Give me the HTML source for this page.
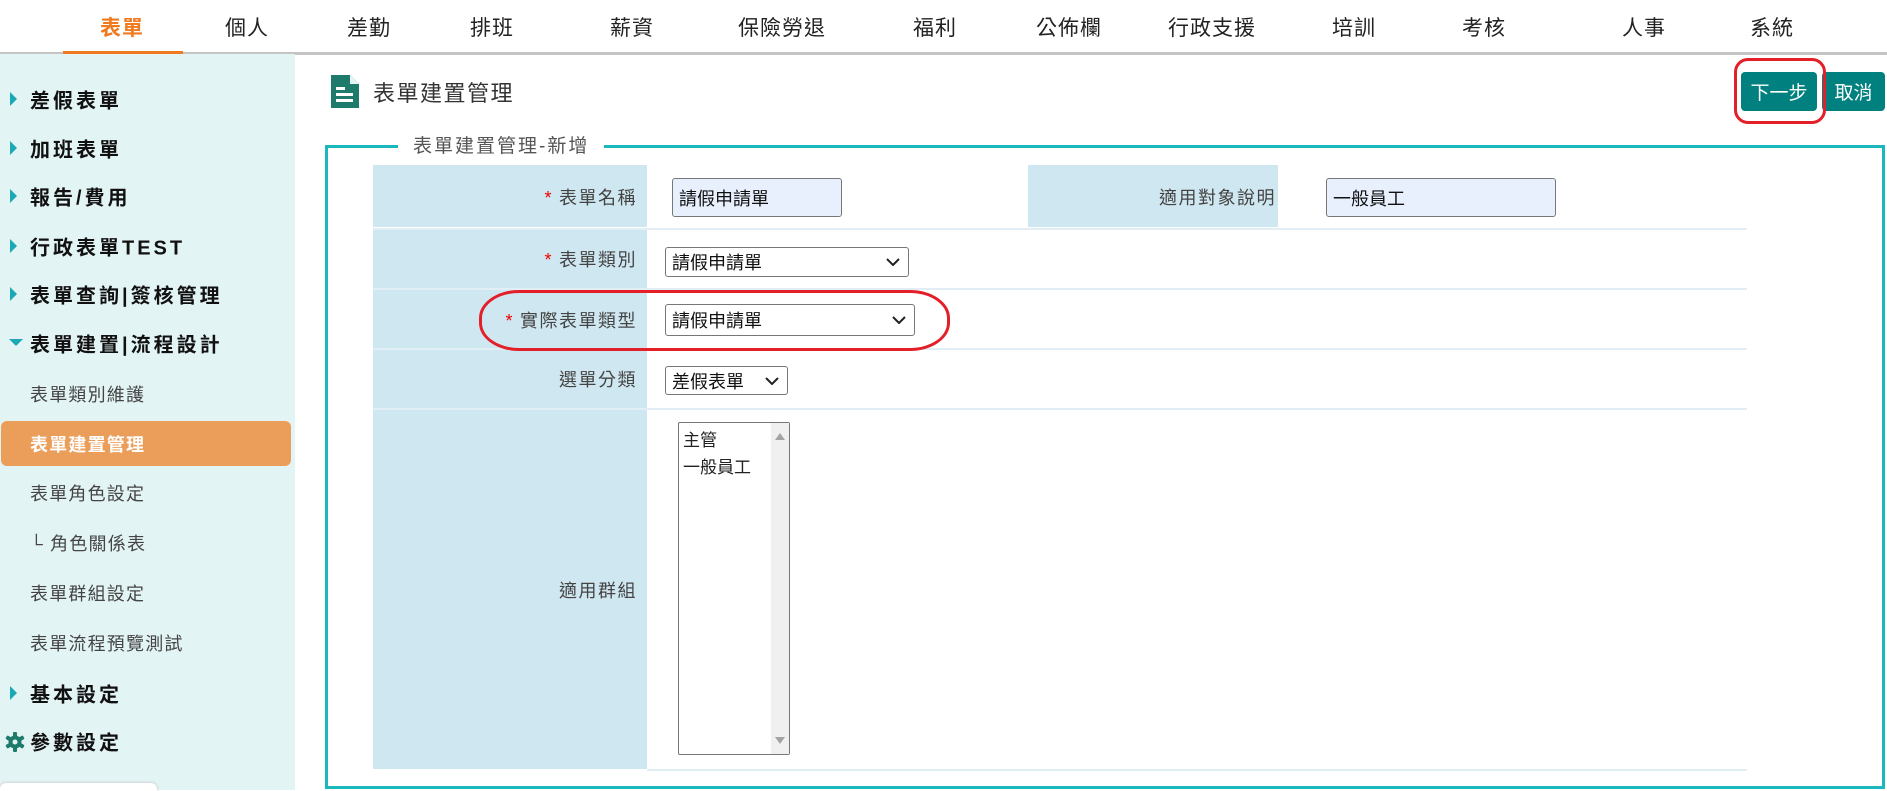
<!DOCTYPE html>
<html><head><meta charset="utf-8"><style>
*{margin:0;padding:0;box-sizing:border-box}
body{width:1887px;height:790px;overflow:hidden;background:#fff;font-family:"Liberation Sans","Noto Sans CJK TC",sans-serif;position:relative;color:#222}
.a{position:absolute}
.tab{position:absolute;top:12px;font-size:21px;color:#222;transform:translateX(-50%);letter-spacing:1px;white-space:nowrap}
.side{left:0;top:54px;width:295px;height:736px;background:#e3f4f5}
.si{position:absolute;left:30px;font-size:20px;font-weight:bold;letter-spacing:3px;color:#111;transform:translateY(-50%);white-space:nowrap}
.tri{position:absolute;left:10px;width:0;height:0;border-top:7px solid transparent;border-bottom:7px solid transparent;border-left:7px solid #1aa9b5;transform:translateY(-50%)}
.sub{position:absolute;left:30px;font-size:18px;letter-spacing:1.2px;color:#444;transform:translateY(-50%);white-space:nowrap}
.lab{position:absolute;background:#cfe7f0}
.lt{position:absolute;font-size:18px;color:#444;letter-spacing:1.5px;text-align:right;transform:translateY(-50%);white-space:nowrap}
.lt b{color:#e00;font-weight:normal;margin-right:6px}
.inp{position:absolute;background:#e8f0fe;border:1px solid #777;border-radius:3px;font-size:18px;padding-left:6px;display:flex;align-items:center;color:#111}
.sel{position:absolute;background:#fff;border:1px solid #777;border-radius:3px;font-size:18px;padding-left:6px;display:flex;align-items:center;color:#111}
.sel svg{position:absolute;right:8px;top:50%;margin-top:-4px}
.sep{position:absolute;background:#e2eef5;height:2px}
</style></head><body>
<div class="a" style="left:0;top:52px;width:1887px;height:3px;background:#c4c4c4"></div>
<div class="a" style="left:63px;top:51px;width:120px;height:4px;background:#f07a20"></div>
<div class="tab" style="left:122px;color:#f07a20;font-weight:bold">表單</div>
<div class="tab" style="left:247px">個人</div>
<div class="tab" style="left:369px">差勤</div>
<div class="tab" style="left:492px">排班</div>
<div class="tab" style="left:632px">薪資</div>
<div class="tab" style="left:782px">保險勞退</div>
<div class="tab" style="left:935px">福利</div>
<div class="tab" style="left:1069px">公佈欄</div>
<div class="tab" style="left:1212px">行政支援</div>
<div class="tab" style="left:1354px">培訓</div>
<div class="tab" style="left:1484px">考核</div>
<div class="tab" style="left:1644px">人事</div>
<div class="tab" style="left:1772px">系統</div>

<div class="a side"></div>
<div class="tri" style="top:99px"></div><div class="si" style="top:99px">差假表單</div>
<div class="tri" style="top:148px"></div><div class="si" style="top:148px">加班表單</div>
<div class="tri" style="top:196px"></div><div class="si" style="top:196px">報告/費用</div>
<div class="tri" style="top:246px"></div><div class="si" style="top:246px">行政表單TEST</div>
<div class="tri" style="top:294px"></div><div class="si" style="top:294px">表單查詢|簽核管理</div>
<div class="a" style="left:9px;top:339px;border-left:7px solid transparent;border-right:7px solid transparent;border-top:7px solid #1aa9b5"></div><div class="si" style="top:343px">表單建置|流程設計</div>
<div class="sub" style="top:394px">表單類別維護</div>
<div class="a" style="left:1px;top:421px;width:290px;height:45px;background:#eb9d5a;border-radius:6px"></div>
<div class="sub" style="top:444px;color:#fff;font-weight:bold">表單建置管理</div>
<div class="sub" style="top:493px">表單角色設定</div>
<div class="sub" style="top:543px">└ 角色關係表</div>
<div class="sub" style="top:593px">表單群組設定</div>
<div class="sub" style="top:643px">表單流程預覽測試</div>
<div class="tri" style="top:693px"></div><div class="si" style="top:693px">基本設定</div>
<svg class="a" style="left:5px;top:732px" width="20" height="20" viewBox="0 0 20 20"><g fill="#1e7a6a"><circle cx="10" cy="10" r="6.5"/><rect x="8" y="0" width="4" height="20" rx="1"/><rect x="8" y="0" width="4" height="20" rx="1" transform="rotate(60 10 10)"/><rect x="8" y="0" width="4" height="20" rx="1" transform="rotate(120 10 10)"/></g><circle cx="10" cy="10" r="2.5" fill="#e3f4f5"/></svg>
<div class="si" style="top:741px">參數設定</div>
<div class="a" style="left:0;top:783px;width:157px;height:8px;background:#fff;border-radius:6px 6px 0 0;box-shadow:0 0 3px #bbb"></div>

<svg class="a" style="left:331px;top:75px" width="28" height="33" viewBox="0 0 28 33"><path d="M0 0H19L28 9V33H0Z" fill="#1e7a6a"/><path d="M19 0V9H28" fill="#e3f4f5"/><rect x="5" y="12" width="9" height="3" fill="#fff"/><rect x="5" y="18" width="17" height="3" fill="#fff"/><rect x="5" y="24" width="17" height="3" fill="#fff"/></svg>
<div class="a" style="left:373px;top:76px;font-size:22px;color:#333;letter-spacing:1.5px">表單建置管理</div>

<div class="a" style="left:1741px;top:72px;width:76px;height:39px;background:#00807f;border-radius:4px;color:#fff;font-size:19px;display:flex;align-items:center;justify-content:center">下一步</div>
<div class="a" style="left:1822px;top:72px;width:63px;height:39px;background:#00807f;border-radius:4px;color:#fff;font-size:19px;display:flex;align-items:center;justify-content:center">取消</div>
<div class="a" style="left:1734px;top:58px;width:92px;height:66px;border:3px solid #e3202a;border-radius:14px"></div>

<div class="a" style="left:325px;top:145px;width:1560px;height:644px;border:3px solid #1ab8bd"></div>
<div class="a" style="left:398px;top:131px;padding:0 15px;background:#fff;font-size:19px;color:#555;letter-spacing:2px">表單建置管理-新增</div>

<div class="lab" style="left:373px;top:165px;width:274px;height:62px"></div>
<div class="lab" style="left:1028px;top:165px;width:250px;height:62px"></div>
<div class="sep" style="left:373px;top:228px;width:1374px"></div>
<div class="lab" style="left:373px;top:230px;width:274px;height:58px"></div>
<div class="sep" style="left:373px;top:288px;width:1374px"></div>
<div class="lab" style="left:373px;top:290px;width:274px;height:58px"></div>
<div class="sep" style="left:373px;top:348px;width:1374px"></div>
<div class="lab" style="left:373px;top:350px;width:274px;height:58px"></div>
<div class="sep" style="left:373px;top:408px;width:1374px"></div>
<div class="lab" style="left:373px;top:410px;width:274px;height:359px"></div>
<div class="sep" style="left:647px;top:769px;width:1100px"></div>

<div class="lt" style="right:1250px;top:197px"><b>*</b>表單名稱</div>
<div class="lt" style="right:611px;top:197px">適用對象說明</div>
<div class="lt" style="right:1250px;top:259px"><b>*</b>表單類別</div>
<div class="lt" style="right:1250px;top:320px"><b>*</b>實際表單類型</div>
<div class="lt" style="right:1250px;top:379px">選單分類</div>
<div class="lt" style="right:1250px;top:590px">適用群組</div>

<div class="inp" style="left:672px;top:178px;width:170px;height:39px">請假申請單</div>
<div class="inp" style="left:1326px;top:178px;width:230px;height:39px">一般員工</div>
<div class="sel" style="left:665px;top:247px;width:244px;height:30px">請假申請單<svg width="14" height="8"><path d="M1 1L7 7L13 1" stroke="#222" stroke-width="2" fill="none"/></svg></div>
<div class="sel" style="left:665px;top:304px;width:250px;height:32px">請假申請單<svg width="14" height="8"><path d="M1 1L7 7L13 1" stroke="#222" stroke-width="2" fill="none"/></svg></div>
<div class="sel" style="left:665px;top:366px;width:123px;height:29px">差假表單<svg width="14" height="8"><path d="M1 1L7 7L13 1" stroke="#222" stroke-width="2" fill="none"/></svg></div>
<div class="a" style="left:678px;top:422px;width:112px;height:333px;border:1px solid #777;border-radius:2px;background:#fff;font-size:17px;padding:4px 4px;line-height:27px;color:#222">主管<br>一般員工
<div class="a" style="right:0;top:0;width:18px;height:331px;background:#f0f0f0"><div class="a" style="left:4px;top:10px;border-left:5px solid transparent;border-right:5px solid transparent;border-bottom:7px solid #a3a3a3"></div><div class="a" style="left:4px;bottom:10px;border-left:5px solid transparent;border-right:5px solid transparent;border-top:7px solid #a3a3a3"></div></div></div>

<div class="a" style="left:479px;top:290px;width:471px;height:61px;border:3px solid #e3202a;border-radius:40px/28px"></div>
</body></html>
